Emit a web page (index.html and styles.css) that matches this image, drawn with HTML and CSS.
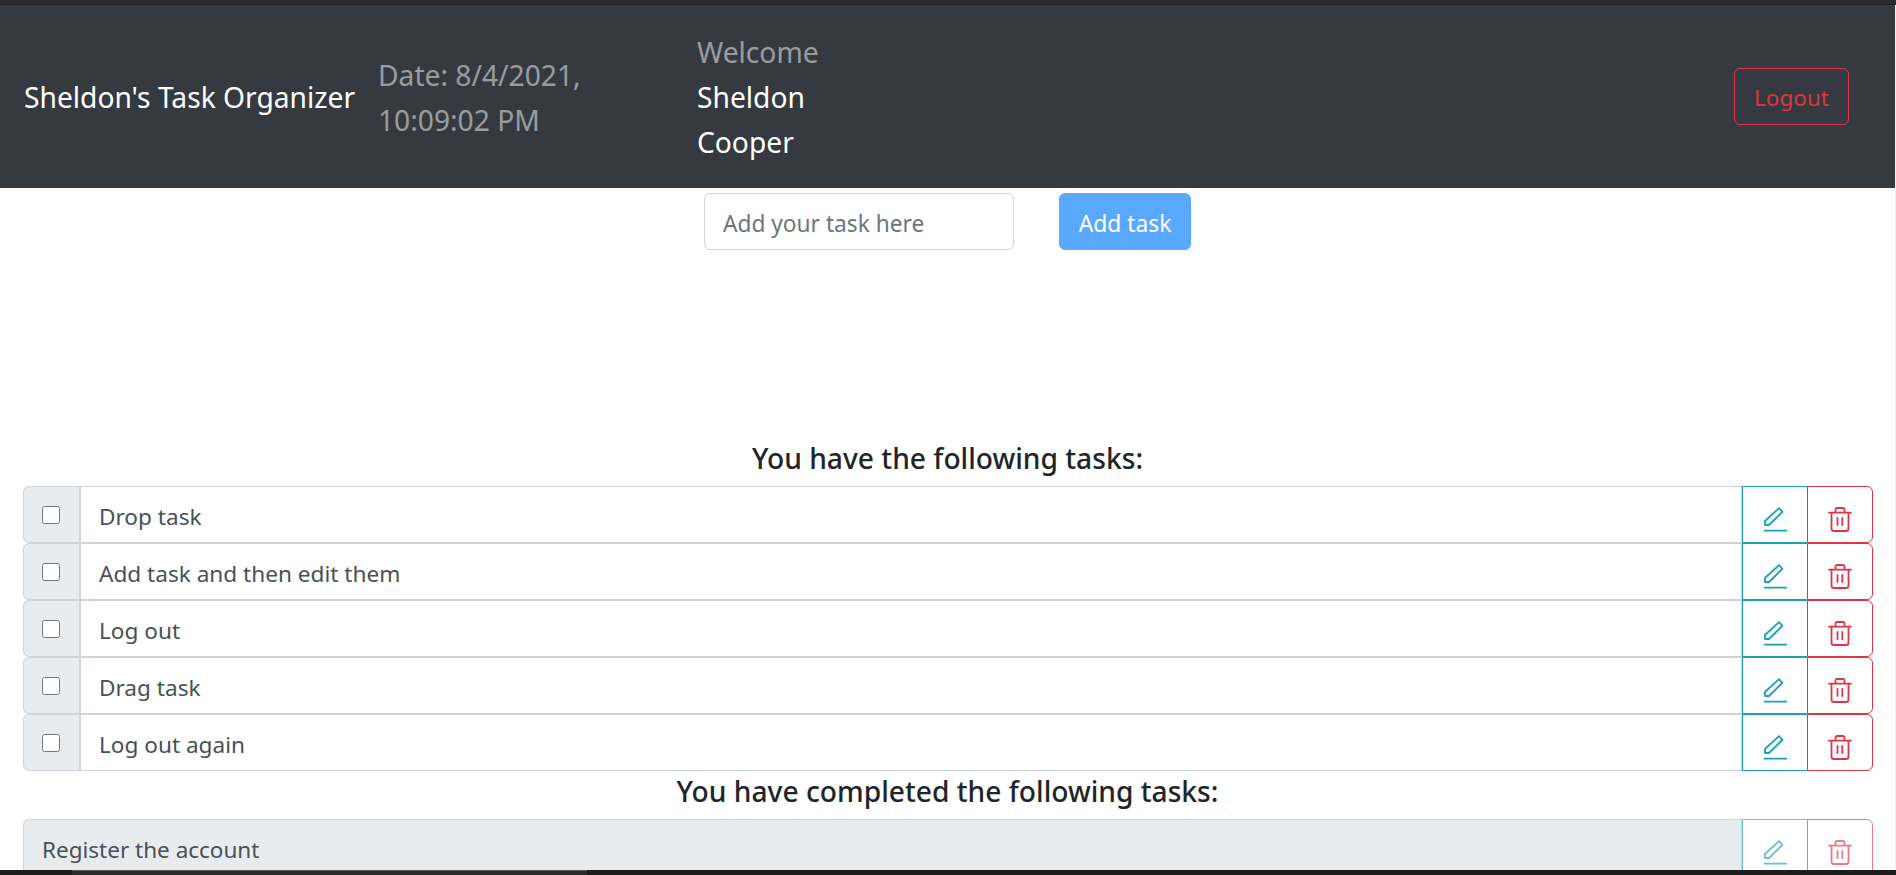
FILE: index.html
```html
<!DOCTYPE html>
<html lang="en">
<head>
  <meta charset="UTF-8" />
  <title>Sheldon's Task Organizer</title>
  <link rel="stylesheet" href="styles.css">
</head>
<body>
  <svg class="defs" width="0" height="0">
    <symbol id="icon-edit" viewBox="0 0 24 25">
      <path d="M16 1.2 19.4 4.8 6 18H2V14Z" fill="none" stroke="currentColor" stroke-width="1.8" stroke-linejoin="round"/>
      <path d="M1.5 23.6H23.5" fill="none" stroke="currentColor" stroke-width="1.8" stroke-linecap="round"/>
    </symbol>
    <symbol id="icon-trash" viewBox="0 0 23 25">
      <path d="M.5 5.7H22.5M7 5.5V2.6Q7 1 8.6 1H14.4Q16 1 16 2.6V5.5M3 5.7V21.4Q3 24 5.6 24H17.4Q20 24 20 21.4V5.7M9 11V18M13.8 11V18" fill="none" stroke="currentColor" stroke-width="1.8" stroke-linecap="round"/>
    </symbol>
  </svg>

  <div class="top-strip"></div>

  <div class="page">
    <header class="navbar">
      <span class="brand">Sheldon's Task Organizer</span>
      <span class="date">Date: 8/4/2021, 10:09:02 PM</span>
      <div class="welcome">
        <span class="welcome-label">Welcome</span>
        <span>Sheldon Cooper</span>
      </div>
      <button class="logout">Logout</button>
    </header>

    <form class="add-form">
      <input class="add-input" type="text" placeholder="Add your task here">
      <button class="add-btn" type="button">Add task</button>
    </form>

    <h5 class="list-title first">You have the following tasks:</h5>
    <div class="task-row">
      <label class="check-cell"><input type="checkbox"></label>
      <div class="task-text">Drop task</div>
      <button class="btn-edit"><svg class="icon"><use href="#icon-edit"/></svg></button>
      <button class="btn-delete"><svg class="icon"><use href="#icon-trash"/></svg></button>
    </div>
    <div class="task-row">
      <label class="check-cell"><input type="checkbox"></label>
      <div class="task-text">Add task and then edit them</div>
      <button class="btn-edit"><svg class="icon"><use href="#icon-edit"/></svg></button>
      <button class="btn-delete"><svg class="icon"><use href="#icon-trash"/></svg></button>
    </div>
    <div class="task-row">
      <label class="check-cell"><input type="checkbox"></label>
      <div class="task-text">Log out</div>
      <button class="btn-edit"><svg class="icon"><use href="#icon-edit"/></svg></button>
      <button class="btn-delete"><svg class="icon"><use href="#icon-trash"/></svg></button>
    </div>
    <div class="task-row">
      <label class="check-cell"><input type="checkbox"></label>
      <div class="task-text">Drag task</div>
      <button class="btn-edit"><svg class="icon"><use href="#icon-edit"/></svg></button>
      <button class="btn-delete"><svg class="icon"><use href="#icon-trash"/></svg></button>
    </div>
    <div class="task-row">
      <label class="check-cell"><input type="checkbox"></label>
      <div class="task-text">Log out again</div>
      <button class="btn-edit"><svg class="icon"><use href="#icon-edit"/></svg></button>
      <button class="btn-delete"><svg class="icon"><use href="#icon-trash"/></svg></button>
    </div>

    <h5 class="list-title">You have completed the following tasks:</h5>
    <div class="task-row done">
      <div class="task-text">Register the account</div>
      <button class="btn-edit" disabled><svg class="icon"><use href="#icon-edit"/></svg></button>
      <button class="btn-delete" disabled><svg class="icon"><use href="#icon-trash"/></svg></button>
    </div>
  </div>

  <div class="taskbar"><div class="taskbar-tab"></div></div>
</body>
</html>
```

FILE: styles.css
```css
* {
  box-sizing: border-box;
}

body {
  margin: 0;
  height: 875px;
  overflow: hidden;
  display: flex;
  flex-direction: column;
  font-family: 'Noto Sans', 'Open Sans', sans-serif;
  background: #fff;
  color: #212529;
}

.defs {
  position: absolute;
}

.top-strip {
  height: 5px;
  flex: none;
  background: #2b2b2b;
  border-bottom: 1px solid #1f1f1f;
}

.page {
  flex: 1;
  overflow: hidden;
  border-right: 1px solid #f1f1f1;
}

.navbar {
  display: flex;
  align-items: center;
  height: 183px;
  padding: 2px 46px 0 24px;
  background: #343a40;
  font-size: 28.2px;
  line-height: 45px;
}

.brand {
  color: #fff;
  width: 354px;
  flex: none;
}

.date {
  color: rgba(255, 255, 255, 0.5);
  width: 319px;
  padding-right: 90px;
  flex: none;
}

.welcome {
  width: 140px;
  color: #fff;
}

.welcome-label {
  display: block;
  color: rgba(255, 255, 255, 0.5);
}

.logout {
  margin: -2px 0 0 auto;
  width: 115px;
  height: 57px;
  padding: 4px 0 0;
  background: transparent;
  border: 1px solid #dc3545;
  border-radius: 6px;
  color: #dc3545;
  font: inherit;
  font-size: 22.5px;
  line-height: 1;
}

.add-form {
  display: flex;
  justify-content: center;
  gap: 45px;
  margin-top: 5px;
}

.add-input {
  width: 310px;
  height: 57px;
  padding: 3px 18px 0;
  border: 1px solid #ced4da;
  border-radius: 6px;
  font: inherit;
  font-size: 22.7px;
  color: #495057;
}

.add-input::placeholder {
  color: #6c757d;
}

.add-btn {
  width: 132px;
  height: 57px;
  padding: 3px 0 0;
  border: 1px solid #59a9ff;
  border-radius: 6px;
  background: #59a9ff;
  color: #fff;
  font: inherit;
  font-size: 22.8px;
}

.list-title {
  margin: 0 0 3px;
  padding-bottom: 4px;
  font-size: 28.2px;
  line-height: 41px;
  font-weight: 550;
  text-align: center;
  color: #212529;
}

.list-title.first {
  margin-top: 188px;
}

.task-row {
  display: flex;
  height: 57px;
  margin: 0 22px 0 23px;
  font-size: 22.6px;
  color: #495057;
}

.check-cell {
  display: flex;
  align-items: center;
  justify-content: center;
  width: 58px;
  flex: none;
  padding-right: 2px;
  background: #e9ecef;
  border: 1px solid #ced4da;
  border-right-width: 2px;
  border-radius: 6px 0 0 6px;
}

.check-cell input {
  width: 18px;
  height: 18px;
  margin: 0;
}

.task-text {
  flex: 1;
  display: flex;
  align-items: center;
  padding: 3px 18px 0;
  border: 1px solid #ced4da;
  border-left: 0;
}

.btn-edit,
.btn-delete {
  display: flex;
  align-items: center;
  justify-content: center;
  padding: 9px 0 0;
  background: #fff;
  border: 1px solid;
}

.btn-edit {
  width: 65px;
  color: #17a2b8;
  border-color: #17a2b8;
  border-right: 0;
}

.btn-delete {
  width: 66px;
  color: #dc3545;
  border-color: #dc3545;
  border-radius: 0 6px 6px 0;
}

.icon {
  width: 24px;
  height: 25px;
}

.done .task-text {
  background: #e9ecef;
  padding-left: 18px;
  font-size: 22.5px;
  border-left: 1px solid #ced4da;
  border-radius: 6px 0 0 6px;
}

.done button {
  opacity: 0.65;
}

.taskbar {
  height: 5px;
  flex: none;
  background: #1c1c1c;
}

.taskbar-tab {
  width: 515px;
  height: 5px;
  margin-left: 72px;
  background: #2b2b2b;
  border-top: 1px solid #555;
}
```
